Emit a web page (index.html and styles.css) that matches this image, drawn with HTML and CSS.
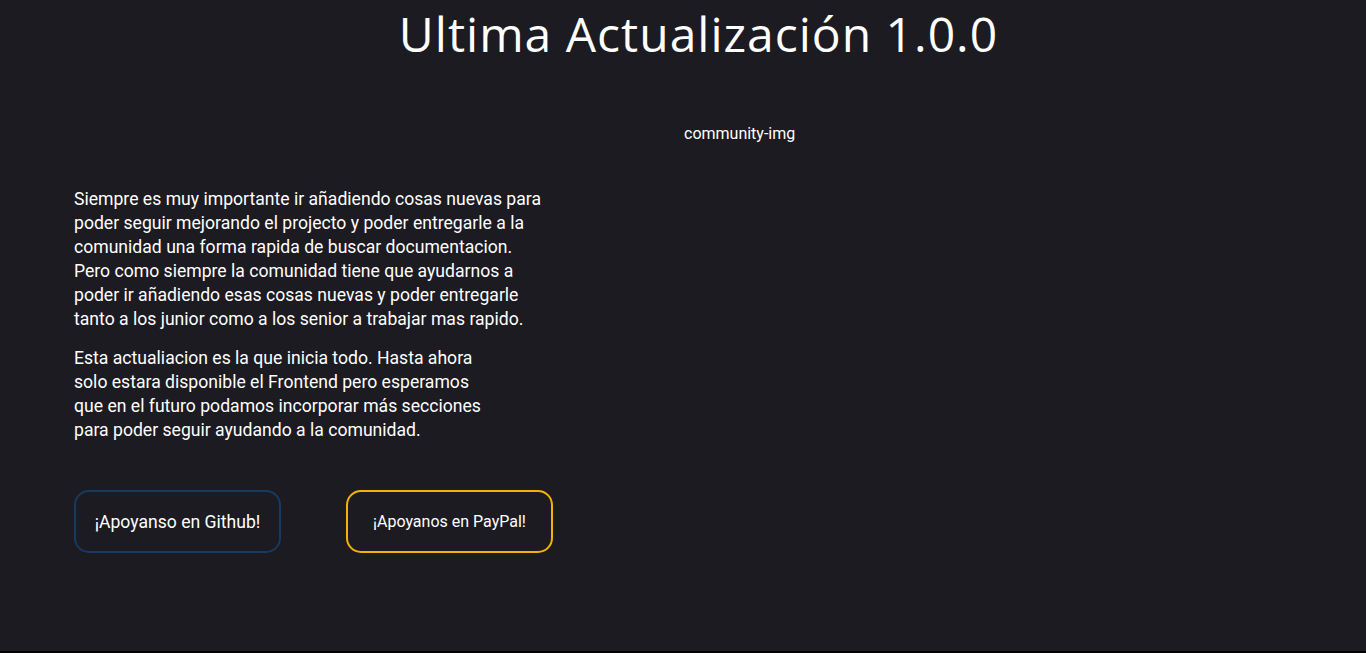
FILE: index.html
```html
<!DOCTYPE html>
<html lang="es">
<head>
<meta charset="utf-8">
<title>Ultima Actualización</title>
<link rel="stylesheet" href="styles.css">
</head>
<body>
<main class="page">
  <h1 class="title">Ultima Actualización 1.0.0</h1>
  <section class="content">
    <div class="text-col">
      <p class="para">Siempre es muy importante ir añadiendo cosas nuevas para<br>poder seguir mejorando el projecto y poder entregarle a la<br>comunidad una forma rapida de buscar documentacion.<br>Pero como siempre la comunidad tiene que ayudarnos a<br>poder ir añadiendo esas cosas nuevas y poder entregarle<br>tanto a los junior como a los senior a trabajar mas rapido.</p>
      <p class="para">Esta actualiacion es la que inicia todo. Hasta ahora<br>solo estara disponible el Frontend pero esperamos<br>que en el futuro podamos incorporar más secciones<br>para poder seguir ayudando a la comunidad.</p>
      <div class="buttons">
        <a class="btn btn-github">¡Apoyanso en Github!</a>
        <a class="btn btn-paypal">¡Apoyanos en PayPal!</a>
      </div>
    </div>
    <div class="img-col">
      <span class="img-alt">community-img</span>
    </div>
  </section>
</main>
</body>
</html>
```

FILE: styles.css
```css
html, body {
  margin: 0;
  padding: 0;
  height: 100%;
}
body {
  background: #1c1b21;
  color: #ffffff;
  font-family: Roboto, "Liberation Sans", sans-serif;
  border-bottom: 2px solid #000;
  box-sizing: border-box;
}
.page {
  display: flex;
  flex-direction: column;
}
.title {
  margin: 6px 0 0;
  padding-left: 31px;
  text-align: center;
  font-family: "Open Sans", "DejaVu Sans", sans-serif;
  font-weight: 400;
  font-size: 48px;
  line-height: 56px;
  letter-spacing: 1px;
  color: #fff;
}
.content {
  display: flex;
  padding-left: 74px;
  margin-top: 63px;
}
.text-col {
  width: 520px;
  padding-top: 62px;
}
.para {
  margin: 0 0 15px;
  font-size: 17.6px;
  line-height: 24px;
}
.buttons {
  display: flex;
  gap: 65px;
  margin-top: 48px;
}
.btn {
  box-sizing: border-box;
  width: 207px;
  height: 63px;
  border-radius: 15px;
  border: 2px solid;
  display: flex;
  align-items: center;
  justify-content: center;
  color: #fff;
}
.btn-github {
  border-color: #173a60;
  font-size: 17.6px;
}
.btn-paypal {
  border-color: #f4b300;
  font-size: 16px;
}
.img-col {
  flex: 1;
  display: flex;
  padding-left: 90px;
}
.img-alt {
  font-size: 16px;
  line-height: 18px;
}
```
